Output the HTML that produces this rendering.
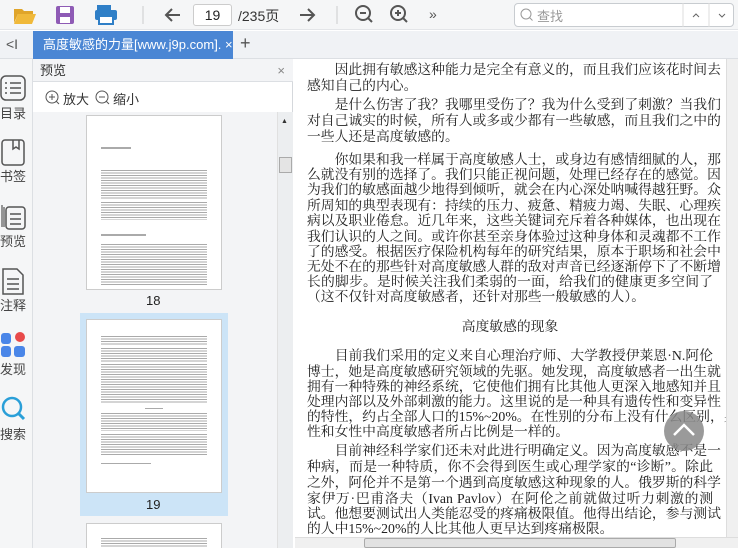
<!DOCTYPE html>
<html><head><meta charset="utf-8"><style>
*{margin:0;padding:0;box-sizing:border-box}
html{width:738px;height:548px;overflow:hidden}
body{width:738px;height:548px;overflow:hidden;background:#fff;font-family:"Liberation Sans","Noto Sans CJK SC",sans-serif;position:relative}
.abs{position:absolute}
#tb{left:0;top:0;width:738px;height:30px;background:#f5f6f7;border-bottom:1px solid #e3e5e8}
#tabs{left:0;top:31px;width:738px;height:28px;background:#f0f2f5;border-bottom:1px solid #dcdfe3}
#tab{left:33px;top:31px;width:200px;height:28px;background:#4a86d4;color:#fff;font-size:13px;line-height:28px;padding-left:10px;white-space:nowrap;overflow:hidden}
#side{left:0;top:59px;width:33px;height:489px;background:#f5f6f7;border-right:1px solid #dcdfe3}
.si{position:absolute;left:0;width:33px;text-align:left;font-size:13px;color:#444}
#panel{left:33px;top:59px;width:260px;height:489px;background:#fff;border-right:1px solid #d5d8dc}
#ph{left:33px;top:59px;width:260px;height:23px;background:#f3f4f6;border-bottom:1px solid #dcdfe3;font-size:13px;color:#333;line-height:23px;padding-left:7px}
#list{left:33px;top:112px;width:244px;height:436px;background:#f3f4f6}
#vs1{left:277px;top:112px;width:16px;height:436px;background:#eceef0;border-left:1px solid #e0e0e0}
.thumb{position:absolute;left:86px;width:136px;background:#fff;border:1px solid #ccc;overflow:hidden}
.tl{position:absolute;height:2px;background:#aaa;left:14px;right:14px}
.tx{position:absolute;left:14px;right:14px;background:repeating-linear-gradient(#aaa 0 1px,#fff 1px 2.5px)}
#main{left:295px;top:59px;width:431px;height:478px;background:#fff}
.ln{position:absolute;left:307px;width:406px;font-family:"Liberation Serif","Noto Serif CJK SC",serif;font-size:13.8px;color:#222;text-align:justify;text-align-last:justify;white-space:nowrap;line-height:16px;height:16px}
.ln.e{text-align-last:left}
#vs2{left:726px;top:59px;width:12px;height:478px;background:#f0f0f0;border-left:1px solid #ddd}
#hs{left:295px;top:537px;width:443px;height:11px;background:#f0f0f0;border-top:1px solid #ddd}
</style></head><body>
<div id="tb" class="abs"></div>
<svg class="abs" style="left:0;top:0" width="738" height="30">
 <path d="M14 9h8l2 2h9v3H18l-4 9z" fill="#e0a52a"/><path d="M18 14h18l-4 10H14z" fill="#f0b93a"/>
 <rect x="56" y="6" width="18" height="18" rx="2" fill="#8e5bb5"/><rect x="60" y="7" width="10" height="6" fill="#fff"/><rect x="60" y="17" width="10" height="6" fill="#fff"/>
 <rect x="97" y="5" width="14" height="5" fill="#2f7fc7"/><rect x="95" y="10" width="22" height="10" rx="2" fill="#2f7fc7"/><rect x="99" y="16" width="14" height="8" fill="#fff" stroke="#2f7fc7" stroke-width="2"/>
 <line x1="143" y1="6" x2="143" y2="24" stroke="#ccc"/>
 <path d="M180 15h-14M172 9l-6 6 6 6" stroke="#555" stroke-width="2" fill="none"/>
 <path d="M300 15h14M308 9l6 6-6 6" stroke="#555" stroke-width="2" fill="none"/>
 <line x1="337" y1="6" x2="337" y2="24" stroke="#ccc"/>
 <circle cx="363" cy="13" r="7" stroke="#555" stroke-width="2" fill="none"/><path d="M360 13h6M368 18l4 4" stroke="#555" stroke-width="2"/>
 <circle cx="398" cy="13" r="7" stroke="#555" stroke-width="2" fill="none"/><path d="M395 13h6M398 10v6M403 18l4 4" stroke="#555" stroke-width="2"/>
 <text x="429" y="19" font-size="14" fill="#555" font-family="Liberation Sans">»</text>
</svg>
<div class="abs" style="left:193px;top:4px;width:39px;height:22px;background:#fff;border:1px solid #ccc;border-radius:3px;font-size:14px;text-align:center;line-height:20px;color:#222">19</div>
<div class="abs" style="left:238px;top:6px;font-size:14px;color:#333">/235页</div>
<div class="abs" style="left:514px;top:3px;width:220px;height:24px;background:#fff;border:1px solid #c8ccd0;border-radius:4px"></div>
<svg class="abs" style="left:514px;top:3px" width="220" height="24"><circle cx="12" cy="11" r="5" stroke="#999" fill="none"/><path d="M15.5 14.5l3 3" stroke="#999"/><line x1="169" y1="0" x2="169" y2="24" stroke="#ddd"/><line x1="195" y1="0" x2="195" y2="24" stroke="#ddd"/><path d="M179 14l3-3 3 3M205 11l3 3 3-3" stroke="#666" fill="none"/></svg>
<div class="abs" style="left:537px;top:6px;font-size:13px;color:#999">查找</div>
<div id="tabs" class="abs"></div>
<div class="abs" style="left:6px;top:36px;font-size:14px;color:#555">&lt;I</div>
<div id="tab" class="abs">高度敏感的力量[www.j9p.com]. ×</div>
<div class="abs" style="left:240px;top:33px;font-size:18px;color:#555">+</div>
<div id="side" class="abs"></div>
<svg class="abs" style="left:0;top:74px" width="33" height="350">
 <rect x="1" y="2" width="24" height="24" rx="5" stroke="#555" stroke-width="1.5" fill="none"/><path d="M5 9h2M10 9h11M5 14h2M10 14h11M5 19h2M10 19h11" stroke="#555" stroke-width="1.5"/>
 <rect x="2" y="66" width="22" height="25" rx="3" stroke="#555" stroke-width="1.5" fill="none"/><path d="M13 66v9l3-2 3 2v-9" stroke="#555" stroke-width="1.5" fill="none"/>
 <path d="M2 131v22M4 133v20" stroke="#555" stroke-width="1.2"/>
 <rect x="6" y="133" width="19" height="22" rx="3" stroke="#555" stroke-width="1.5" fill="#f5f6f7"/><path d="M10 140h11M10 145h11M10 150h11" stroke="#555" stroke-width="1.5"/>
 <path d="M3 195h14l6 6v19H3z" stroke="#555" stroke-width="1.5" fill="none"/><path d="M7 205h12M7 210h12M7 215h12" stroke="#555" stroke-width="1.5"/>
 <rect x="1" y="259" width="10" height="11" rx="3" fill="#4a86e8"/><circle cx="20" cy="263" r="5" fill="#e84a4a"/>
 <rect x="1" y="272" width="10" height="11" rx="3" fill="#4a86e8"/><rect x="14" y="272" width="11" height="11" rx="3" fill="#4a86e8"/>
 <circle cx="12" cy="333" r="9" stroke="#2a9fd8" stroke-width="2.5" fill="none"/><path d="M19 340l5 5" stroke="#2a9fd8" stroke-width="3"/>
</svg>
<div class="si" style="top:103px">目录</div>
<div class="si" style="top:166px">书签</div>
<div class="si" style="top:231px">预览</div>
<div class="si" style="top:295px">注释</div>
<div class="si" style="top:359px">发现</div>
<div class="si" style="top:424px">搜索</div>
<div id="panel" class="abs"></div>
<div id="ph" class="abs">预览<span style="position:absolute;right:8px;color:#888">×</span></div>
<svg class="abs" style="left:44px;top:89px" width="110" height="16"><circle cx="8" cy="8" r="6" stroke="#555" fill="none"/><path d="M5 8h6M8 5v6M12 12l3 3" stroke="#555"/><circle cx="58" cy="8" r="6" stroke="#555" fill="none"/><path d="M55 8h6M62 12l3 3" stroke="#555"/></svg>
<div class="abs" style="left:63px;top:89px;font-size:13px;color:#333">放大</div>
<div class="abs" style="left:113px;top:89px;font-size:13px;color:#333">缩小</div>
<div id="list" class="abs"></div>
<div class="abs" style="left:80px;top:313px;width:148px;height:203px;background:#cce4f7"></div>
<div class="thumb" style="top:115px;height:175px">
 <div class="tl" style="top:31px;right:90px"></div>
 <div class="tx" style="top:54px;height:30px"></div>
 <div class="tx" style="top:86px;height:18px"></div>
 <div class="tl" style="top:118px;right:75px"></div>
 <div class="tx" style="top:128px;height:42px"></div>
</div>
<div class="abs" style="left:146px;top:293px;font-size:13px;color:#222">18</div>
<div class="thumb" style="top:319px;height:174px">
 <div class="tx" style="top:16px;height:10px"></div>
 <div class="tx" style="top:28px;height:14px"></div>
 <div class="tx" style="top:44px;height:40px"></div>
 <div class="tl" style="top:88px;left:58px;right:58px;height:1px"></div>
 <div class="tx" style="top:93px;height:18px"></div>
 <div class="tx" style="top:114px;height:22px"></div>
 <div class="tl" style="top:143px;right:70px;height:1px"></div>
</div>
<div class="abs" style="left:146px;top:497px;font-size:13px;color:#222">19</div>
<div class="thumb" style="top:523px;height:40px"><div class="tx" style="top:14px;height:10px"></div></div>
<div id="vs1" class="abs"></div>
<div class="abs" style="left:279px;top:157px;width:13px;height:16px;background:#e4e4e4;border:1px solid #aaa"></div>
<div class="abs" style="left:281px;top:118px;font-size:7px;color:#333">▲</div>
<div id="main" class="abs"></div>
<div class="ln" style="top:62px">　　因此拥有敏感这种能力是完全有意义的，而且我们应该花时间去</div>
<div class="ln e" style="top:78px">感知自己的内心。</div>
<div class="ln" style="top:97px">　　是什么伤害了我？我哪里受伤了？我为什么受到了刺激？当我们</div>
<div class="ln" style="top:113px">对自己诚实的时候，所有人或多或少都有一些敏感，而且我们之中的</div>
<div class="ln e" style="top:129px">一些人还是高度敏感的。</div>
<div class="ln" style="top:152px">　　你如果和我一样属于高度敏感人士，或身边有感情细腻的人，那</div>
<div class="ln" style="top:167px">么就没有别的选择了。我们只能正视问题，处理已经存在的感觉。因</div>
<div class="ln" style="top:182px">为我们的敏感面越少地得到倾听，就会在内心深处呐喊得越狂野。众</div>
<div class="ln" style="top:198px">所周知的典型表现有：持续的压力、疲惫、精疲力竭、失眠、心理疾</div>
<div class="ln" style="top:213px">病以及职业倦怠。近几年来，这些关键词充斥着各种媒体，也出现在</div>
<div class="ln" style="top:229px">我们认识的人之间。或许你甚至亲身体验过这种身体和灵魂都不工作</div>
<div class="ln" style="top:244px">了的感受。根据医疗保险机构每年的研究结果，原本于职场和社会中</div>
<div class="ln" style="top:259px">无处不在的那些针对高度敏感人群的敌对声音已经逐渐停下了不断增</div>
<div class="ln" style="top:274px">长的脚步。是时候关注我们柔弱的一面，给我们的健康更多空间了</div>
<div class="ln e" style="top:289px">（这不仅针对高度敏感者，还针对那些一般敏感的人）。</div>
<div class="ln e" style="top:319px;text-align-last:center;text-align:center">高度敏感的现象</div>
<div class="ln" style="top:348px">　　目前我们采用的定义来自心理治疗师、大学教授伊莱恩·N.阿伦</div>
<div class="ln" style="top:364px">博士，她是高度敏感研究领域的先驱。她发现，高度敏感者一出生就</div>
<div class="ln" style="top:379px">拥有一种特殊的神经系统，它使他们拥有比其他人更深入地感知并且</div>
<div class="ln" style="top:394px">处理内部以及外部刺激的能力。这里说的是一种具有遗传性和变异性</div>
<div class="ln" style="top:409px">的特性，约占全部人口的15%~20%。在性别的分布上没有什么区别，男</div>
<div class="ln e" style="top:424px">性和女性中高度敏感者所占比例是一样的。</div>
<div class="ln" style="top:443px">　　目前神经科学家们还未对此进行明确定义。因为高度敏感不是一</div>
<div class="ln" style="top:459px">种病，而是一种特质，你不会得到医生或心理学家的“诊断”。除此</div>
<div class="ln" style="top:475px">之外，阿伦并不是第一个遇到高度敏感这种现象的人。俄罗斯的科学</div>
<div class="ln" style="top:491px">家伊万·巴甫洛夫（Ivan Pavlov）在阿伦之前就做过听力刺激的测</div>
<div class="ln" style="top:506px">试。他想要测试出人类能忍受的疼痛极限值。他得出结论，参与测试</div>
<div class="ln e" style="top:521px">的人中15%~20%的人比其他人更早达到疼痛极限。</div>
<svg class="abs" style="left:664px;top:411px" width="40" height="40"><circle cx="20" cy="20" r="20" fill="#888" fill-opacity="0.85"/><path d="M10 24l10-10 10 10" stroke="#fff" stroke-width="2.5" fill="none"/></svg>
<div id="vs2" class="abs"></div>
<div id="hs" class="abs"></div>
<div class="abs" style="left:364px;top:538px;width:312px;height:10px;background:#e2e2e2;border:1px solid #aaa;border-radius:2px"></div>
</body></html>
